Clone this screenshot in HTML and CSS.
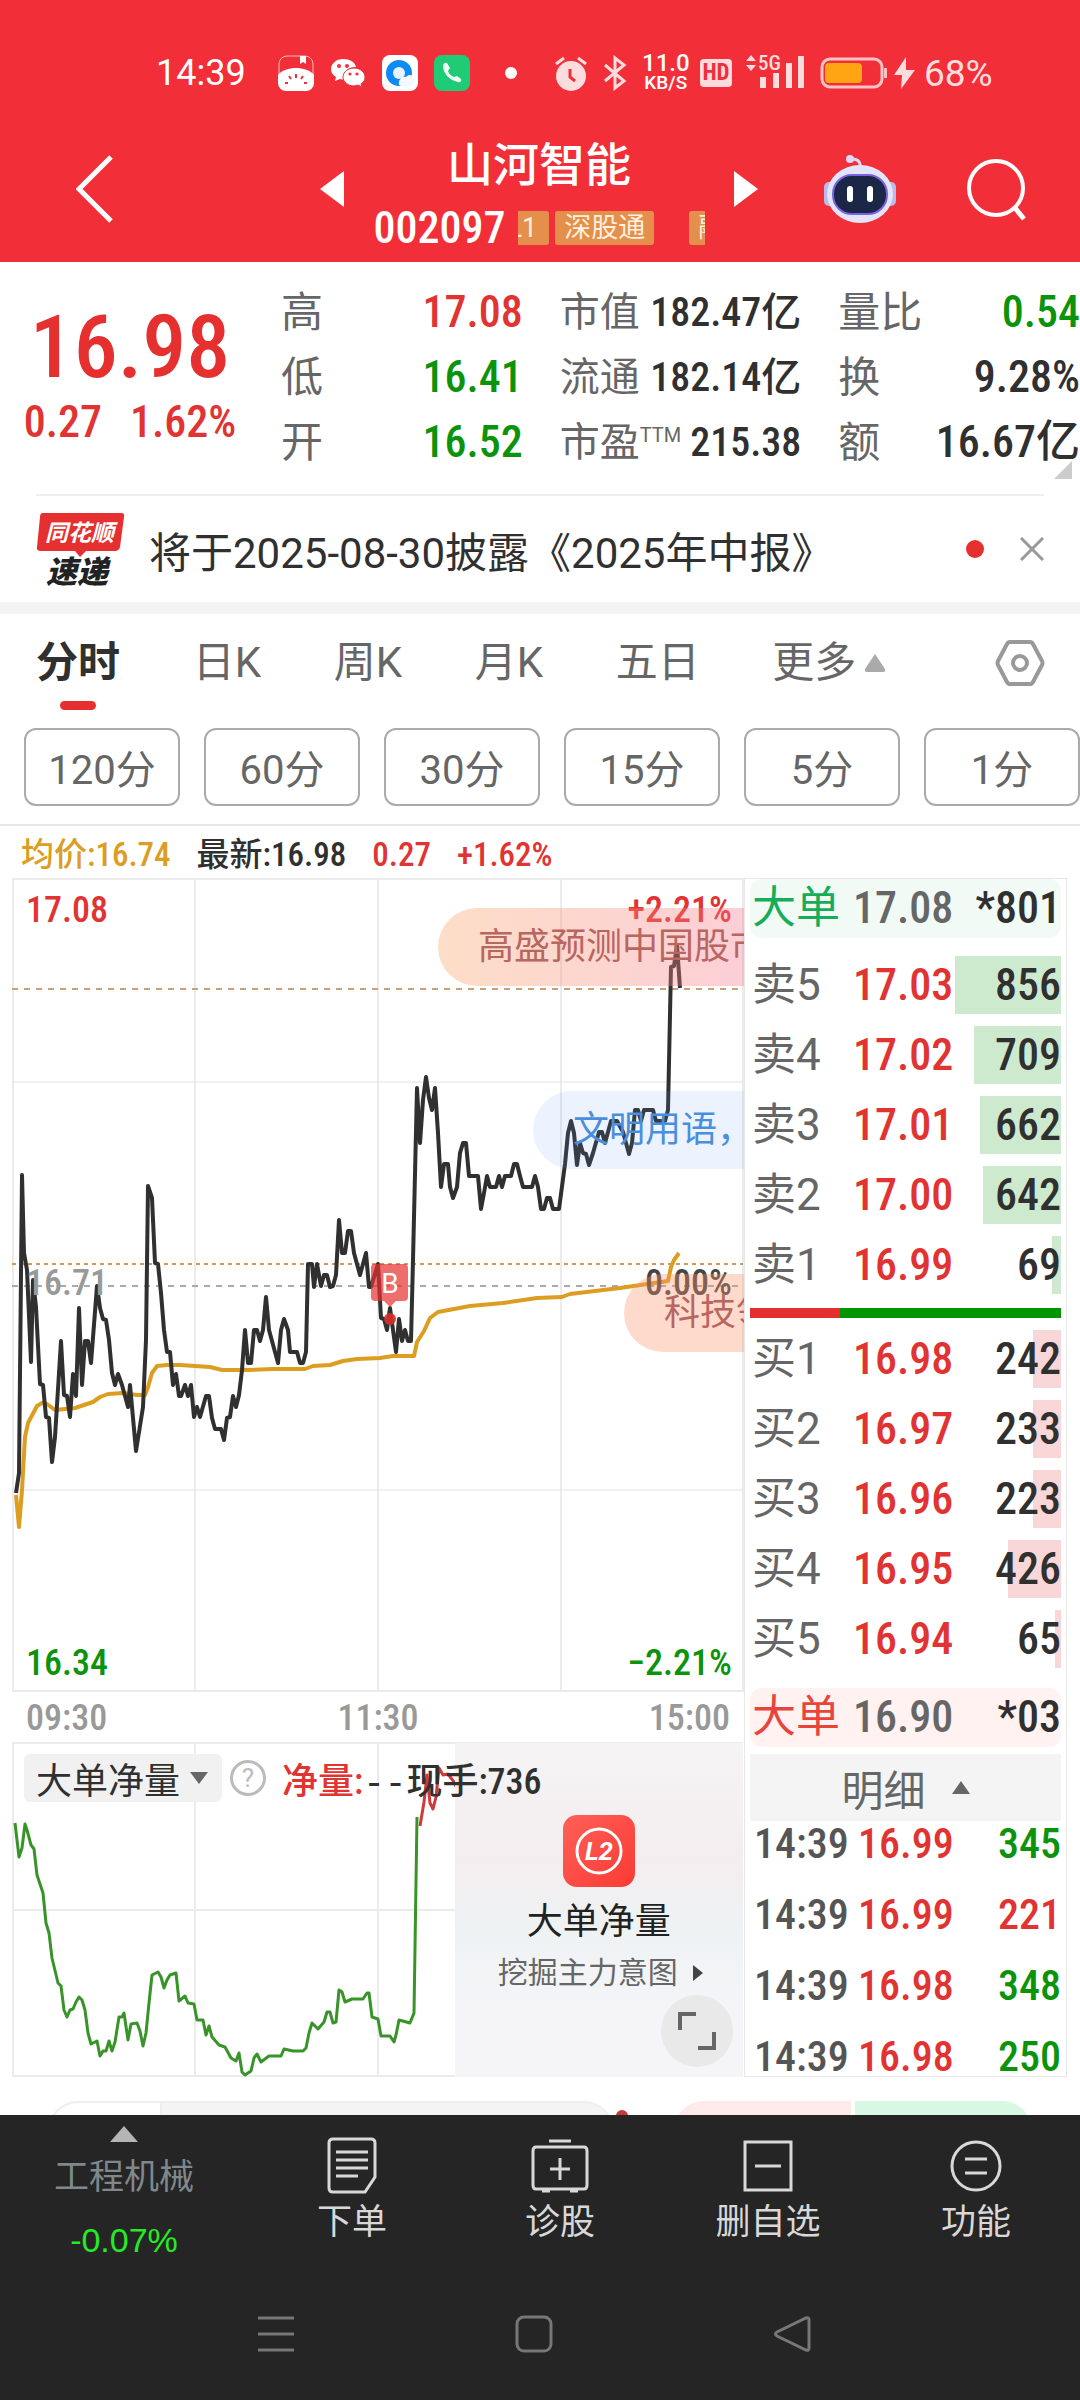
FILE: index.html
```html
<!DOCTYPE html>
<html lang="zh-CN">
<head>
<meta charset="utf-8">
<meta name="viewport" content="width=device-width, initial-scale=1">
<title>山河智能 002097</title>
<link rel="stylesheet" href="styles.css">
</head>
<body>
<header class="top">
  <div class="status">
    <span class="clock">14:39</span>
    <div class="status-apps">
      <svg width="36" height="36" viewBox="0 0 36 36"><rect x="1" y="1" width="34" height="34" rx="8" fill="none" stroke="#fbb" stroke-width="1"/><path d="M22 1h6v8l-3-2-3 2z" fill="#fff"/><path d="M0 20C4 15 11 13 18 13s14 2 18 7v8a8 8 0 0 1-8 8H8a8 8 0 0 1-8-8z" fill="#fff"/><path d="M18 19v4M11 21l2 3M25 21l-2 3M7 28h3M26 28h3" stroke="#f22f38" stroke-width="2"/></svg>
      <svg width="36" height="36" viewBox="0 0 36 36"><path d="M13 4C6 4 1 9 1 14c0 4 2 6 5 8l-1 4 5-2 5 1c-2-9 4-13 11-13-1-5-6-8-13-8z" fill="#fff"/><path d="M24 13c-6 0-11 4-11 9s5 9 11 9l4-1 4 2-1-3c3-2 4-4 4-7 0-5-5-9-11-9z" fill="#fff" stroke="#f22f38" stroke-width="1"/><g fill="#f22f38"><circle cx="9" cy="11" r="2"/><circle cx="17" cy="11" r="2"/><circle cx="20" cy="19" r="1.600"/><circle cx="27" cy="19" r="1.600"/></g></svg>
      <svg width="36" height="36" viewBox="0 0 36 36"><rect width="36" height="36" rx="8" fill="#fff"/><circle cx="17" cy="18" r="13" fill="#0d8bf2"/><circle cx="17" cy="18" r="6" fill="#e8f3fe"/><path d="M17 30c-1-5 3-9 7-8 4-5 9 0 8 3 2 3 0 6-4 6h-9z" fill="#f4f9ff"/></svg>
      <svg width="36" height="36" viewBox="0 0 36 36"><rect width="36" height="36" rx="8" fill="#1fcb75"/><path d="M9 11c0-3 3-4 4-3l3 5-2 3c1 3 3 5 6 6l3-1 4 3c1 2-1 4-3 3C15 25 9 18 9 11z" fill="#effff5"/></svg>
    </div>
    <span class="dot"></span>
    <div class="status-sys">
      <svg width="34" height="36" viewBox="0 0 34 36"><circle cx="17" cy="21" r="15" fill="#fddcdd"/><path d="M2 9l8-6M32 9l-8-6" stroke="#fddcdd" stroke-width="3"/><path d="M16 14v8l5 4" fill="none" stroke="#f22f38" stroke-width="3"/></svg>
      <svg width="26" height="36" viewBox="0 0 26 36"><path d="M3 10l19 16-9 7V3l9 7L3 26" fill="none" stroke="#fddcdd" stroke-width="3"/></svg>
      <span class="rate"><b>11.0</b><b class="unit">KB/S</b></span>
      <span class="hd">HD</span>
      <svg width="60" height="40" viewBox="0 0 60 40"><path d="M0 8l5-6 5 6zM0 12l5 6 5-6z" fill="#fddcdd"/><path d="M17 24v11M30 20v15M43 10v25M55 3v32" stroke="#fddcdd" stroke-width="6"/><text class="g5" x="12" y="17">5G</text></svg>
      <svg width="96" height="36" viewBox="0 0 96 36"><rect x="2" y="4" width="60" height="28" rx="8" fill="none" stroke="#fbc3c5" stroke-width="3"/><path d="M64 13h3v10h-3z" fill="#fbc3c5"/><rect x="5" y="8" width="37" height="20" rx="4" fill="#ffa412"/><path d="M86 2L74 20h8l-1 14 14-19h-9z" fill="#fddcdd"/></svg>
    </div>
    <span class="battery-text">68%</span>
  </div>
  <div class="titlebar">
    <button class="bare back" aria-label="返回"><svg width="38" height="68" viewBox="0 0 38 68"><path d="M35 2L3 34l32 32" fill="none" stroke="#fff" stroke-width="5"/></svg></button>
    <div class="stock">
      <button class="bare" aria-label="上一只"><svg width="24" height="36" viewBox="0 0 24 36"><path d="M24 0v36L0 18z" fill="#fff"/></svg></button>
      <div class="stock-name">
        <h1>山河智能</h1>
        <div class="code-row"><span class="num code">002097</span><div class="tags"><span class="tag tag-first">L1</span><span class="tag">深股通</span><span class="tag tag-next">融</span></div></div>
      </div>
      <button class="bare" aria-label="下一只"><svg width="24" height="36" viewBox="0 0 24 36"><path d="M0 0v36l24-18z" fill="#fff"/></svg></button>
    </div>
    <div class="actions">
      <button class="bare" aria-label="助手"><svg width="72" height="70" viewBox="0 0 72 70"><path d="M36 14c1-6-2-9-8-9" fill="none" stroke="#dcd8f6" stroke-width="3"/><circle cx="26" cy="5" r="4" fill="#dcd8f6"/><rect x="0" y="28" width="10" height="24" rx="5" fill="#b9b9ee"/><rect x="62" y="28" width="10" height="24" rx="5" fill="#b9b9ee"/><ellipse cx="36" cy="40" rx="33" ry="29" fill="#e4e5fb"/><rect x="9" y="21" width="54" height="39" rx="19" fill="#1c2748" stroke="#7a63e0" stroke-width="2"/><rect x="23" y="32" width="6" height="16" rx="3" fill="#fff"/><rect x="43" y="32" width="6" height="16" rx="3" fill="#fff"/></svg></button>
      <button class="bare" aria-label="搜索"><svg width="62" height="64" viewBox="0 0 62 64"><circle cx="32" cy="31" r="27" fill="none" stroke="#fff" stroke-width="4"/><path d="M51 51l9 11" stroke="#fff" stroke-width="5"/></svg></button>
    </div>
  </div>
</header>

<section class="quote">
  <div class="last">
    <div class="num last-price">16.98</div>
    <div class="num change"><span>0.27</span><span>1.62%</span></div>
  </div>
  <dl class="stats">
    <div><dt>高</dt><dd class="up">17.08</dd></div>
    <div><dt>低</dt><dd class="down">16.41</dd></div>
    <div><dt>开</dt><dd class="down">16.52</dd></div>
  </dl>
  <dl class="stats compact">
    <div><dt>市值</dt><dd>182.47亿</dd></div>
    <div><dt>流通</dt><dd>182.14亿</dd></div>
    <div><dt>市盈<sup>TTM</sup></dt><dd>215.38</dd></div>
  </dl>
  <dl class="stats">
    <div><dt>量比</dt><dd class="down">0.54</dd></div>
    <div><dt>换</dt><dd>9.28%</dd></div>
    <div><dt>额</dt><dd>16.67亿</dd></div>
  </dl>
  <span class="corner"></span>
</section>

<section class="news">
  <svg width="90" height="74" viewBox="0 0 90 74"><path d="M7 1h78q4 0 3 4l-4 30q-1 4-5 4H50l-6 6-5-6H5q-5 0-4-4L4 5q0-4 3-4z" fill="#e5302f"/><text class="logo-top" x="9" y="29">同花顺</text><text class="logo-bottom" x="10" y="71">速递</text></svg>
  <a href="#" class="news-text">将于2025-08-30披露《2025年中报》</a>
  <span class="news-dot"></span>
  <button class="bare" aria-label="关闭"><svg width="24" height="24" viewBox="0 0 24 24"><path d="M1 1l22 22M23 1L1 23" stroke="#999" stroke-width="3"/></svg></button>
</section>

<nav class="tabs">
  <button class="tab active">分时</button>
  <button class="tab">日K</button>
  <button class="tab">周K</button>
  <button class="tab">月K</button>
  <button class="tab">五日</button>
  <button class="tab more">更多<svg width="22" height="18" viewBox="0 0 22 18"><path d="M11 0l10 15q1 3-2 3H3q-3 0-2-3z" fill="#aaa"/></svg></button>
  <button class="tab" aria-label="设置"><svg width="50" height="48" viewBox="0 0 50 48"><path d="M15 3h20q2 0 3 2l9 17q1 2 0 4l-9 17q-1 2-3 2H15q-2 0-3-2L3 26q-1-2 0-4l9-17q1-2 3-2z" fill="none" stroke="#999" stroke-width="4"/><circle cx="25" cy="24" r="7" fill="none" stroke="#999" stroke-width="4"/></svg></button>
</nav>
<div class="periods">
  <button>120分</button><button>60分</button><button>30分</button><button>15分</button><button>5分</button><button>1分</button>
</div>

<div class="legend num"><span class="avg">均价:16.74</span><span>最新:16.98</span><span class="up">0.27</span><span class="up">+1.62%</span></div>

<main class="board">
  <div class="charts">
    <div class="price-chart">
      <svg viewBox="12 878 732 814">
        <path d="M12 879H743M12 1691H743M13 878V1692M195 878V1692M378 878V1692M561 878V1692M743 878V1692" fill="none" stroke="#ebebeb" stroke-width="2"/>
        <path d="M12 1082H743M12 1490H743" stroke="#e2e2e2"/>
        <path d="M12 989H743" stroke="#c6a276" stroke-width="2" stroke-dasharray="6 6"/>
        <path d="M12 1264H743" stroke="#cd9a58" stroke-width="2" stroke-dasharray="4 4"/>
        <path d="M12 1286H743" stroke="#aaa" stroke-width="2" stroke-dasharray="6 6"/>
        <polyline class="avg-line" points="16,1495 19,1527 22,1490 25,1437 28,1423 37,1406 42,1403 47,1404 55,1410 75,1408 93,1402 100,1397 108,1394 123,1393 137,1395 145,1395 148,1387 152,1373 157,1366 167,1365 180,1365 210,1367 222,1370 247,1370 273,1369 305,1369 313,1366 330,1365 343,1361 357,1359 380,1358 393,1356 414,1356 417,1342 424,1331 430,1318 438,1312 470,1306 503,1303 537,1298 562,1297 570,1294 620,1288 668,1281 671,1267 674,1260 679,1253"/>
        <polyline class="price-line" points="16,1493 19,1473 22,1175 24,1253 27,1270 31,1362 33,1280 36,1307 40,1384 43,1385 46,1417 49,1418 52,1462 55,1437 61,1341 64,1395 67,1396 70,1417 73,1374 76,1396 79,1308 82,1385 85,1341 88,1341 91,1363 97,1286 100,1308 103,1319 106,1320 109,1340 112,1373 115,1385 118,1374 122,1385 128,1407 130,1385 136,1451 143,1407 146,1340 148,1186 152,1198 155,1263 158,1264 161,1293 164,1330 167,1352 170,1352 173,1385 176,1374 179,1396 181,1396 185,1385 188,1396 191,1385 194,1417 197,1407 200,1417 206,1396 209,1396 212,1418 215,1429 221,1429 224,1440 227,1418 230,1417 233,1396 236,1407 239,1395 242,1370 245,1330 248,1363 251,1363 254,1330 257,1330 260,1341 263,1330 266,1297 269,1330 278,1363 281,1330 284,1319 288,1330 290,1352 297,1352 300,1363 303,1363 306,1352 308,1264 312,1264 314,1287 317,1264 321,1286 324,1275 327,1275 330,1287 333,1286 336,1275 339,1220 342,1253 345,1253 348,1231 351,1231 354,1253 360,1275 366,1253 369,1287 371,1287 378,1264 381,1318 384,1319 387,1330 390,1308 396,1352 399,1319 402,1341 405,1330 408,1341 411,1341 413,1260 417,1088 420,1143 423,1100 426,1077 429,1098 432,1110 435,1088 438,1133 441,1187 444,1164 448,1164 450,1187 453,1198 457,1187 460,1153 463,1143 466,1143 469,1176 478,1176 481,1209 484,1193 487,1176 490,1187 496,1187 499,1176 502,1187 505,1176 511,1176 514,1164 517,1164 520,1176 523,1187 532,1187 535,1176 538,1187 541,1209 544,1209 547,1198 550,1198 553,1209 559,1209 565,1164 568,1133 571,1121 574,1133 577,1165 580,1143 583,1153 586,1154 589,1165 593,1153 599,1132 602,1132 605,1143 611,1121 617,1121 623,1132 626,1143 629,1154 632,1143 635,1110 638,1110 641,1121 644,1110 653,1110 656,1121 665,1121 668,1110 671,967 674,966 677,945 680,988"/>
        <path d="M375 1264h29q4 0 4 4v29q0 4-4 4h-8l-6 6-6-6h-9q-4 0-4-4v-29q0-4 4-4z" fill="#e5302f" fill-opacity=".7"/>
        <circle cx="390" cy="1319" r="6" fill="#d8302f" fill-opacity=".9"/>
        <text class="buy-mark" x="390" y="1293">B</text>
      </svg>
      <span class="mark top-left up">17.08</span><span class="mark top-right up">+2.21%</span>
      <span class="mark mid-left">16.71</span><span class="mark mid-right">0.00%</span>
      <span class="mark bottom-left down">16.34</span><span class="mark bottom-right down">−2.21%</span>
      <span class="bullet bullet-a">高盛预测中国股市</span>
      <span class="bullet bullet-b">文明用语，</span>
      <span class="bullet bullet-c">科技领</span>
    </div>
    <div class="axis num"><span>09:30</span><span>11:30</span><span>15:00</span></div>
    <div class="flow-chart">
      <svg viewBox="12 1742 732 335">
        <path d="M12 1743H743M12 1910H743M12 2076H743M13 1742V2077M195 1742V2077M378 1742V2077" fill="none" stroke="#ebebeb" stroke-width="2"/>
        <polyline class="flow-line" points="15,1823 19,1857 22,1848 25,1824 27,1830 31,1845 34,1849 37,1875 43,1893 46,1923 49,1933 52,1958 58,1983 61,1986 64,2010 67,2017 70,2010 73,2009 76,2002 79,1997 82,2000 85,2010 88,2033 91,2044 97,2041 100,2056 103,2051 106,2051 109,2041 112,2051 115,2042 119,2017 122,2017 124,2013 128,2040 131,2024 137,2023 140,2031 143,2046 146,2033 149,2003 152,1975 158,1972 161,1977 164,1988 167,1980 170,1975 176,1973 179,2001 185,1996 188,2003 194,2004 197,2020 203,2020 206,2035 209,2026 212,2037 219,2045 225,2047 231,2058 236,2061 239,2053 242,2072 245,2075 251,2071 254,2058 257,2054 261,2062 269,2056 281,2056 284,2049 293,2051 303,2051 306,2048 309,2033 312,2023 318,2029 324,2022 327,2012 330,2012 333,2023 336,2022 339,1990 342,1992 345,2002 352,1999 363,1999 367,1993 369,1993 372,2017 378,2019 381,2036 390,2036 394,2042 396,2035 399,2020 410,2023 414,2013 417,1817"/>
        <polyline class="flow-line in" points="420,1826 424,1802 427,1775 430,1803 433,1809 436,1797 439,1768 443,1775 448,1774 454,1782 458,1790"/>
      </svg>
      <div class="promo">
        <svg width="72" height="72" viewBox="0 0 72 72"><defs><linearGradient id="l2" x2="1" y2="1"><stop stop-color="#ff6058"/><stop offset="1" stop-color="#fa3a34"/></linearGradient></defs><rect width="72" height="72" rx="14" fill="url(#l2)"/><circle cx="36" cy="36" r="22" fill="none" stroke="#fff" stroke-width="3"/><text class="l2-text" x="36" y="45">L2</text></svg>
        <strong>大单净量</strong>
        <a href="#">挖掘主力意图<svg width="12" height="18" viewBox="0 0 12 18"><path d="M1 1l10 8-10 8z" fill="#444"/></svg></a>
      </div>
      <button class="bare expand" aria-label="全屏"><svg width="38" height="38" viewBox="0 0 38 38"><path d="M2 18V2h16M36 20v16H20" fill="none" stroke="#666" stroke-width="4"/></svg></button>
      <div class="flow-head">
        <button class="metric">大单净量<svg width="18" height="12" viewBox="0 0 18 12"><path d="M0 0h18l-9 12z" fill="#666"/></svg></button>
        <button class="bare help">?</button>
        <span class="flow-values"><span class="up">净量:</span><span class="blank">--</span>现手:736</span>
      </div>
    </div>
  </div>

  <aside class="book">
    <div class="row big sell"><span>大单</span><b>17.08</b><em>*801</em></div>
    <div class="levels">
      <div class="row"><span>卖5</span><b>17.03</b><em>856</em><i style="width:34%"></i></div>
      <div class="row"><span>卖4</span><b>17.02</b><em>709</em><i style="width:28%"></i></div>
      <div class="row"><span>卖3</span><b>17.01</b><em>662</em><i style="width:26%"></i></div>
      <div class="row"><span>卖2</span><b>17.00</b><em>642</em><i style="width:25%"></i></div>
      <div class="row"><span>卖1</span><b>16.99</b><em>69</em><i style="width:3%"></i></div>
    </div>
    <div class="ratio"><i style="width:29%"></i></div>
    <div class="levels bids">
      <div class="row"><span>买1</span><b>16.98</b><em>242</em><i style="width:9%"></i></div>
      <div class="row"><span>买2</span><b>16.97</b><em>233</em><i style="width:9%"></i></div>
      <div class="row"><span>买3</span><b>16.96</b><em>223</em><i style="width:9%"></i></div>
      <div class="row"><span>买4</span><b>16.95</b><em>426</em><i style="width:17%"></i></div>
      <div class="row"><span>买5</span><b>16.94</b><em>65</em><i style="width:2%"></i></div>
    </div>
    <div class="row big buy"><span>大单</span><b>16.90</b><em>*03</em></div>
    <button class="detail">明细<svg width="18" height="13" viewBox="0 0 18 13"><path d="M9 0l9 13H0z" fill="#666"/></svg></button>
    <table class="ticks">
      <tr><td>14:39</td><td class="up">16.99</td><td class="down">345</td></tr>
      <tr><td>14:39</td><td class="up">16.99</td><td class="up">221</td></tr>
      <tr><td>14:39</td><td class="up">16.98</td><td class="down">348</td></tr>
      <tr><td>14:39</td><td class="up">16.98</td><td class="down">250</td></tr>
    </table>
  </aside>
</main>

<div class="peek"><div class="peek-left"><span></span></div><div class="peek-right"><span></span><span></span></div><i class="peek-dot"></i></div>

<footer class="dock">
  <nav class="toolbar">
    <a href="#" class="sector"><svg width="28" height="16" viewBox="0 0 28 16"><path d="M14 0l14 16H0z" fill="#b5b5b5"/></svg><span>工程机械</span><span class="sector-change">-0.07%</span></a>
    <a href="#"><svg width="60" height="60" viewBox="0 0 60 60"><path d="M11 4h38q4 0 4 4v34L43 57H11q-4 0-4-4V8q0-4 4-4zM14 17h32M14 25h32M14 33h32M14 41h22"/></svg><span>下单</span></a>
    <a href="#"><svg width="60" height="60" viewBox="0 0 60 60"><path d="M19 6h22M6 12h48q3 0 3 4v34q0 4-3 4H6q-3 0-3-4V16q0-4 3-4zM30 23v22M20 34h20M12 56h8M40 56h8"/></svg><span>诊股</span></a>
    <a href="#"><svg width="60" height="60" viewBox="0 0 60 60"><path d="M7 7h46v48H7zM17 31h26"/></svg><span>删自选</span></a>
    <a href="#"><svg width="60" height="60" viewBox="0 0 60 60"><circle cx="30" cy="31" r="24"/><path d="M19 24h22M19 38h22"/></svg><span>功能</span></a>
  </nav>
  <div class="sysnav">
    <button class="bare" aria-label="菜单"><svg width="38" height="38" viewBox="0 0 38 38"><path d="M1 3h36M1 19h36M1 35h36"/></svg></button>
    <button class="bare" aria-label="主页"><svg width="38" height="38" viewBox="0 0 38 38"><rect x="2" y="2" width="34" height="34" rx="7"/></svg></button>
    <button class="bare" aria-label="后退"><svg width="38" height="38" viewBox="0 0 38 38"><path d="M33 3q3-1 3 2v28q0 3-3 2L4 21q-3-2 0-4z"/></svg></button>
  </div>
</footer>
</body>
</html>
```
FILE: styles.css
```css
:root {
  --red: #e13332;
  --green: #0b930b;
  --ink: #303030;
  --gray: #666;
  --text: Roboto, "Noto Sans CJK SC", sans-serif;
  --digits: "Roboto Condensed", "Noto Sans CJK SC", sans-serif;
}
* { box-sizing: border-box; }
body { margin: 0; background: #fff; color: var(--ink); font-family: var(--text); overflow-x: hidden; }
button { font: inherit; color: inherit; border: 0; background: none; padding: 0; }
.bare { display: grid; place-items: center; }
svg { display: block; flex: none; }
a { color: inherit; text-decoration: none; }
.num { font-family: var(--digits); font-weight: 500; }
.up { color: var(--red); }
.down { color: var(--green); }

/* header */
.top { background: #f22f38; color: #fff; }
.status { display: flex; align-items: center; height: 132px; padding: 14px 0 0 156px; }
.clock { font-size: 36px; width: 122px; }
.status-apps { display: flex; gap: 16px; }
.dot { width: 12px; height: 12px; border-radius: 50%; background: #fff; margin-left: 35px; }
.status-sys { display: flex; align-items: center; gap: 14px; margin-left: 37px; }
.rate { display: grid; justify-items: center; width: 44px; font-size: 24px; line-height: 19px; }
.rate b { font-weight: 500; }
.rate .unit { font-size: 19px; }
.hd { width: 32px; height: 28px; border-radius: 4px; background: #fddcdd; color: #f22f38; font: 700 23px/28px var(--digits); text-align: center; }
.g5 { font: 500 21px var(--digits); fill: #fddcdd; }
.battery-text { margin-left: 8px; font-size: 37px; color: #fddcdd; }
.titlebar { display: grid; grid-template-columns: 244px 438px 1fr; align-items: center; height: 130px; padding: 0 54px 0 76px; }
.titlebar .bare { padding-bottom: 16px; }
.back { justify-self: start; }
.stock { display: flex; justify-content: space-between; align-items: center; }
.stock-name { display: grid; justify-items: center; }
h1 { margin: 0; font-size: 46px; font-weight: 500; line-height: 62px; }
.code-row { display: flex; align-items: center; gap: 12px; height: 64px; }
.code { font-size: 44px; }
.tags { display: flex; gap: 6px; width: 187px; overflow: hidden; }
.tag { flex: none; height: 34px; padding: 0 9px; border-radius: 3px; background: #e48f4b; color: #fff0df; font-size: 27px; line-height: 34px; }
.tag-first { padding: 0 12px 0 4px; margin-left: -14px; }
.tag-next { margin-left: 29px; }
.actions { display: flex; justify-content: space-between; padding-left: 66px; }

/* quote */
.quote { position: relative; display: grid; grid-template-columns: 244px 1fr 1fr 1fr; gap: 37px; height: 232px; padding-top: 18px; }
.last { display: grid; justify-items: center; align-content: start; padding: 25px 0 0 16px; }
.last-price { font-size: 88px; line-height: 84px; color: #e5302f; }
.change { display: flex; gap: 28px; font-size: 44px; line-height: 66px; color: var(--red); }
.stats { margin: 0; font-size: 42px; }
.stats div { display: flex; justify-content: space-between; line-height: 65px; height: 65px; white-space: nowrap; }
.stats dt { color: var(--gray); }
.stats dd { margin: 0; font-family: var(--digits); font-weight: 500; font-size: 44px; }
.compact, .compact dd { font-size: 40px; }
sup { font-size: 20px; line-height: 20px; vertical-align: 14px; }
.corner { position: absolute; right: 8px; bottom: 15px; border: solid transparent; border-width: 0 0 18px 18px; border-bottom-color: #ccc; }

/* news */
.news { display: flex; align-items: center; gap: 23px; height: 108px; margin: 0 36px; border-top: 2px solid #eee; }
.news-text { flex: 1; font-size: 42px; }
.news-dot { width: 18px; height: 18px; border-radius: 50%; background: #e5302f; margin-right: 13px; }
.logo-top { font: italic 700 23px var(--text); fill: #fff; }
.logo-bottom { font: italic 900 31px var(--text); fill: #222; }

/* tabs */
.tabs { display: flex; align-items: center; justify-content: space-between; height: 126px; padding: 0 35px 16px 36px; border-top: 12px solid #f4f4f4; font-size: 42px; color: var(--gray); }
.tab { position: relative; display: flex; align-items: center; gap: 8px; line-height: 50px; }
.active { font-weight: 700; color: var(--ink); }
.active::after { content: ""; position: absolute; left: 24px; top: 63px; width: 36px; height: 9px; border-radius: 5px; background: #e5302f; }
.more { margin-right: 36px; }
.periods { display: grid; grid-template-columns: repeat(6, 1fr); gap: 24px; height: 98px; padding: 0 0 18px 24px; border-bottom: 2px solid #e6e6e6; }
.periods button { border: 2px solid #aaa; border-radius: 12px; font-size: 40px; color: var(--gray); }

.legend { display: flex; align-items: center; gap: 26px; height: 52px; padding: 6px 0 0 21px; font-size: 33px; line-height: 46px; }
.avg { color: #dc9d20; }

/* charts */
.board { display: grid; grid-template-columns: 732fr 323fr; padding: 0 13px 0 12px; }
.charts > div > svg:first-child { width: 100%; height: auto; }
.price-chart { position: relative; overflow: hidden; }
polyline { fill: none; stroke-linejoin: round; }
.avg-line { stroke: #dc9d20; stroke-width: 4px; }
.price-line { stroke: #303030; stroke-width: 4px; }
.flow-line { stroke: #389428; stroke-width: 3px; }
.flow-line.in { stroke: #d0393a; }
.buy-mark { font: 28px var(--text); fill: #fff; text-anchor: middle; }
.mark { position: absolute; font: 500 36px/40px var(--digits); }
.top-left, .top-right { top: 12px; }
.mid-left, .mid-right { top: 385px; }
.mid-left { color: #999; }
.mid-right { color: #444; }
.bottom-left, .bottom-right { bottom: 9px; }
.top-left, .mid-left, .bottom-left { left: 14px; }
.top-right, .mid-right, .bottom-right { right: 12px; }
.bullet { position: absolute; right: 0; height: 78px; padding-left: 40px; border-radius: 39px 0 0 39px; font-size: 36px; line-height: 78px; white-space: nowrap; overflow: hidden; }
.bullet-a { width: 306px; top: 30px; background: linear-gradient(90deg, rgba(250, 171, 115, .4), rgba(246, 115, 138, .35)); color: #b96560; }
.bullet-b { width: 211px; top: 213px; background: rgba(98, 155, 247, .12); color: #4a8fdc; }
.bullet-c { width: 120px; top: 396px; background: rgba(252, 150, 110, .35); color: #b96560; }
.axis { display: flex; justify-content: space-between; height: 50px; padding: 0 14px; font-size: 36px; line-height: 52px; color: #999; }
.flow-chart { position: relative; }
.flow-head { position: absolute; left: 12px; top: 12px; display: flex; align-items: center; height: 48px; font-size: 36px; white-space: nowrap; }
.metric { display: flex; align-items: center; justify-content: space-between; width: 198px; height: 48px; padding: 0 14px 0 12px; border-radius: 6px; background: #f1f1f1; }
.help { width: 36px; height: 36px; margin: 0 16px 0 8px; border: 3px solid #bbb; border-radius: 50%; font-size: 26px; line-height: 30px; color: #bbb; }
.flow-values { font-family: var(--digits); font-weight: 500; }
.blank { font-family: "Liberation Mono", monospace; }
.promo { position: absolute; right: 1px; top: 1px; bottom: 0; width: calc(39% + 3px); display: grid; justify-items: center; align-content: start; padding-top: 72px; background: linear-gradient(#f5f4f5, #f4edef 35%, #eef2f3 55%, #f5f5f8 80%); }
.promo strong { margin-top: 8px; font-size: 36px; font-weight: 400; line-height: 54px; color: #222; }
.promo a { display: flex; align-items: center; gap: 14px; padding-left: 4px; font-size: 30px; line-height: 48px; color: var(--gray); }
.l2-text { font: italic 700 26px var(--text); fill: #fff; text-anchor: middle; }
.expand { position: absolute; right: 11px; bottom: 10px; width: 72px; height: 72px; border-radius: 50%; background: #e9e9e9; }

/* order book */
.book { border: 1px solid #e8e8e8; padding: 0 5px; }
.row { position: relative; display: grid; grid-template-columns: 103px 104px 1fr; height: 58px; font-size: 44px; line-height: 58px; white-space: nowrap; }
.row > * { position: relative; }
.row span { padding-left: 2px; color: var(--gray); }
.row b, .row em { font-family: var(--digits); font-weight: 500; font-style: normal; }
.row b { color: var(--red); }
.row em { text-align: right; z-index: 1; }
.row i { position: absolute; right: 0; top: 0; bottom: 0; background: #cdeacf; }
.bids .row i { background: #f9d6d7; }
.levels { display: grid; gap: 12px; padding: 18px 0 14px; }
.bids { padding: 12px 0 20px; }
.ratio { height: 10px; background: #029502; }
.ratio i { display: block; height: 10px; background: #e5302f; }
.big { height: 59px; border-radius: 12px; }
.row.big b { color: var(--gray); }
.sell { background: #f1faf5; }
.sell span { color: #14ad59; }
.buy { background: #fff2f1; }
.buy span { color: #e8443c; }
.detail { display: flex; align-items: center; justify-content: center; gap: 26px; width: 100%; height: 67px; margin-top: 7px; background: #f4f4f4; font-size: 42px; color: var(--gray); }
.ticks { width: 100%; border-spacing: 0; margin: -13px 0 -16px; font: 500 42px/71px var(--digits); }
.ticks td { padding: 0; height: 71px; }
.ticks td:first-child { padding-left: 4px; color: #555; width: 108px; }
.ticks td:last-child { text-align: right; }

/* clipped strip above the dock */
.peek { position: relative; display: flex; gap: 60px; height: 38px; padding: 24px 48px 0; overflow: hidden; }
.peek-left { flex: 565; height: 60px; border: 2px solid #eee; border-radius: 30px; background: #f4f4f4; overflow: hidden; }
.peek-left span { display: block; width: 112px; height: 60px; background: #fff; border-right: 2px solid #eee; }
.peek-right { flex: 360; display: flex; gap: 4px; height: 60px; border-radius: 30px; overflow: hidden; }
.peek-right span { flex: 1; background: #feeae8; }
.peek-right span + span { background: #d8f8e4; }
.peek-dot { position: absolute; left: 57%; top: 33px; width: 12px; height: 12px; border-radius: 50%; background: #c8383a; }

/* dock */
.dock { background: #252525; color: #d8d8d8; }
.toolbar { display: grid; grid-template-columns: 248px repeat(4, 1fr); height: 152px; font-size: 35px; }
.toolbar a { display: grid; justify-items: center; align-content: start; padding-top: 20px; line-height: 56px; }
.toolbar a:not(.sector) svg, .sysnav svg { fill: none; stroke: #d8d8d8; stroke-width: 3px; }
.toolbar .sector { padding: 11px 0 0; color: #7f888d; line-height: 62px; }
.toolbar .sector span:nth-child(2) { margin-top: 5px; }
.toolbar .sector-change { font-family: "Liberation Sans", sans-serif; font-size: 34px; color: #25ea25; }
.sysnav { display: grid; grid-template-columns: repeat(3, 258px); justify-content: center; height: 133px; padding: 0 12px 0 0; }
.sysnav svg { stroke: #777; }
```
